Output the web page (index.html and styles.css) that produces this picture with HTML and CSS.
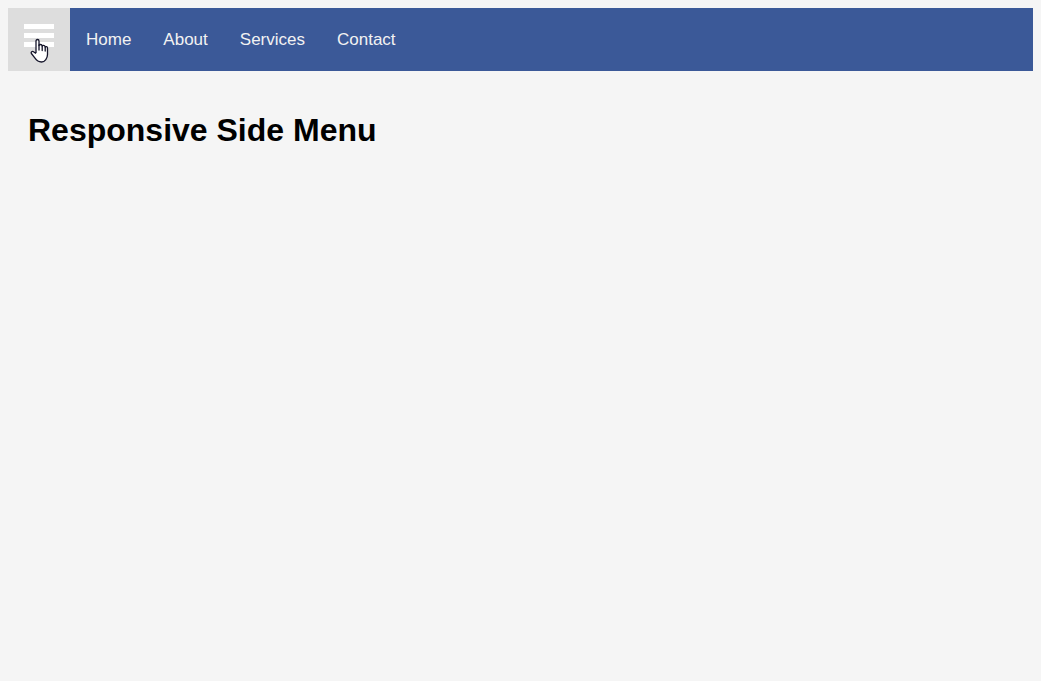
FILE: index.html
```
<!DOCTYPE html>
<html lang="en">
<head>
<meta charset="utf-8">
<meta name="viewport" content="width=device-width, initial-scale=1">
<title>Responsive Side Menu</title>
<link rel="stylesheet" href="styles.css">
</head>
<body>
<nav class="navbar">
  <button class="menu-button" type="button" aria-label="Open menu">
    <svg class="menu-icon" viewBox="0 0 30 30" aria-hidden="true">
      <path d="M0 2.6h30M0 11.6h30M0 20.6h30" stroke="#fff" stroke-width="5"/>
    </svg>
    <svg class="pointer" viewBox="0 0 20 26" aria-hidden="true">
      <path d="M6 15V3.2Q6 1.5 7.5 1.5Q9 1.5 9 3.2V7.5Q9.3 6.5 10.5 6.5Q12 6.5 12.2 8Q12.8 7.2 13.8 7.4Q15 7.6 15.2 9Q15.8 8.4 16.6 8.7Q17.5 9 17.5 10.5V16.5C17.5 20 15 24 11.5 24C8 24 6.5 22.5 5 20.2L1.4 15.5C.6 14 2.3 12.9 3.5 13.7L6 15.6" fill="#fff" stroke="#15152a" stroke-width="1.3" stroke-linejoin="round"/>
      <path d="M9 7v5M12.2 8v4.5M15.2 9v4" fill="none" stroke="#15152a" stroke-width="1.3" stroke-linecap="round"/>
    </svg>
  </button>
  <ul class="navbar-nav">
    <li><a href="#home">Home</a></li>
    <li><a href="#about">About</a></li>
    <li><a href="#services">Services</a></li>
    <li><a href="#contact">Contact</a></li>
  </ul>
</nav>
<main class="content">
  <h1>Responsive Side Menu</h1>
</main>
</body>
</html>
```
FILE: styles.css
```
body {
  margin: 8px;
  background: #f5f5f5;
  font-family: Arial, "Liberation Sans", sans-serif;
}

.navbar {
  display: flex;
  min-height: 63px;
  background: #3b5998;
}

.menu-button {
  position: relative;
  display: flex;
  align-items: flex-start;
  padding: 16px;
  border: 0;
  background: #ddd;
  cursor: pointer;
}

.menu-icon {
  width: 30px;
  height: 30px;
}

.pointer {
  position: absolute;
  top: 30px;
  left: 22px;
  width: 20px;
  height: 26px;
}

.navbar-nav {
  display: flex;
  align-items: center;
  margin: 0;
  padding: 0;
  list-style: none;
}

.navbar-nav a {
  display: block;
  padding: 14px 16px;
  color: #f2f2f2;
  font-size: 17px;
  text-decoration: none;
}

.content {
  padding: 20px;
}

.content h1 {
  margin: 21px 0;
  font-size: 32px;
}
```
